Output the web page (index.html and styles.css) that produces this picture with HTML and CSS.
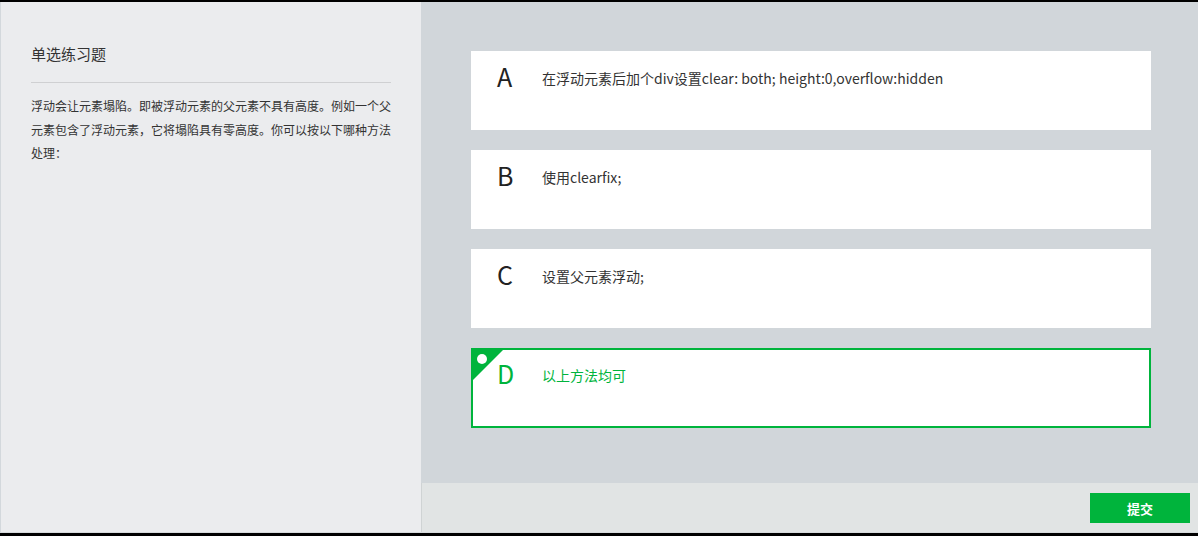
FILE: index.html
```html
<!DOCTYPE html>
<html lang="zh-CN">
<head>
<meta charset="utf-8">
<title>单选练习题</title>
<link rel="stylesheet" href="styles.css">
</head>
<body>
<div class="app">
  <aside class="side">
    <h1 class="title">单选练习题</h1>
    <p class="question">浮动会让元素塌陷。即被浮动元素的父元素不具有高度。例如一个父元素包含了浮动元素，它将塌陷具有零高度。你可以按以下哪种方法处理：</p>
  </aside>
  <main class="main">
    <div class="options">
      <div class="option">
        <span class="letter">A</span>
        <span class="text">在浮动元素后加个div设置clear: both; height:0,overflow:hidden</span>
      </div>
      <div class="option">
        <span class="letter">B</span>
        <span class="text">使用clearfix;</span>
      </div>
      <div class="option">
        <span class="letter">C</span>
        <span class="text">设置父元素浮动;</span>
      </div>
      <div class="option selected">
        <span class="corner"></span>
        <span class="letter">D</span>
        <span class="text">以上方法均可</span>
      </div>
    </div>
    <footer class="footer">
      <button class="submit">提交</button>
    </footer>
  </main>
</div>
</body>
</html>
```
FILE: styles.css
```css
html, body {
  margin: 0;
  padding: 0;
  background: #000;
  height: 536px;
  overflow: hidden;
}
.app {
  margin-top: 2px;
  height: 530px;
  display: flex;
  border-left: 1px solid #d3d8dc;
  border-bottom: 1px solid #d6dadc;
  font-family: "Noto Sans CJK SC", "Liberation Sans", sans-serif;
  color: #333;
}
.side {
  width: 360px;
  flex: none;
  background: #ebecee;
  padding: 0 30px;
}
.title {
  margin: 40px 0 0;
  font-size: 15px;
  font-weight: normal;
  line-height: 24px;
  color: #333;
  padding-bottom: 16px;
  border-bottom: 1px solid #cfd0d2;
}
.question {
  margin: 11px 0 0;
  font-size: 12px;
  line-height: 23.5px;
  color: #333;
}
.main {
  flex: 1;
  display: flex;
  flex-direction: column;
  background: #d1d6da;
}
.options {
  flex: 1;
  padding: 49px 47px 0 50px;
  display: flex;
  flex-direction: column;
  gap: 20px;
}
.option {
  position: relative;
  height: 79px;
  background: #fff;
  display: flex;
  align-items: flex-start;
  box-sizing: border-box;
  padding: 12px 0 0 26px;
}
.letter {
  width: 45px;
  font-size: 25px;
  font-weight: 400;
  line-height: 30px;
  margin-top: -2px;
  margin-bottom: 2px;
  color: #222;
}
.text {
  font-size: 14px;
  line-height: 30px;
  color: #333;
}
.option.selected {
  border: 2px solid #00b43c;
  height: 80px;
  padding: 10px 0 0 24px;
}
.option.selected .letter,
.option.selected .text {
  color: #00b43c;
}
.corner {
  position: absolute;
  left: 0;
  top: 0;
  width: 0;
  height: 0;
  border-top: 30px solid #00b43c;
  border-right: 30px solid transparent;
}
.corner::after {
  content: "";
  position: absolute;
  left: 4px;
  top: -26px;
  width: 10px;
  height: 10px;
  border-radius: 50%;
  background: #fff;
}
.footer {
  height: 49px;
  flex: none;
  background: #e1e4e4;
  border-left: 1px solid #cfd3d4;
  display: flex;
  justify-content: flex-end;
  align-items: center;
  padding-right: 8px;
}
.submit {
  width: 100px;
  height: 30px;
  border: none;
  background: #00b43c;
  color: #fff;
  font-family: "Noto Sans CJK SC", "Liberation Sans", sans-serif;
  font-size: 13px;
  font-weight: bold;
  margin-top: 1px;
  cursor: pointer;
}
```
